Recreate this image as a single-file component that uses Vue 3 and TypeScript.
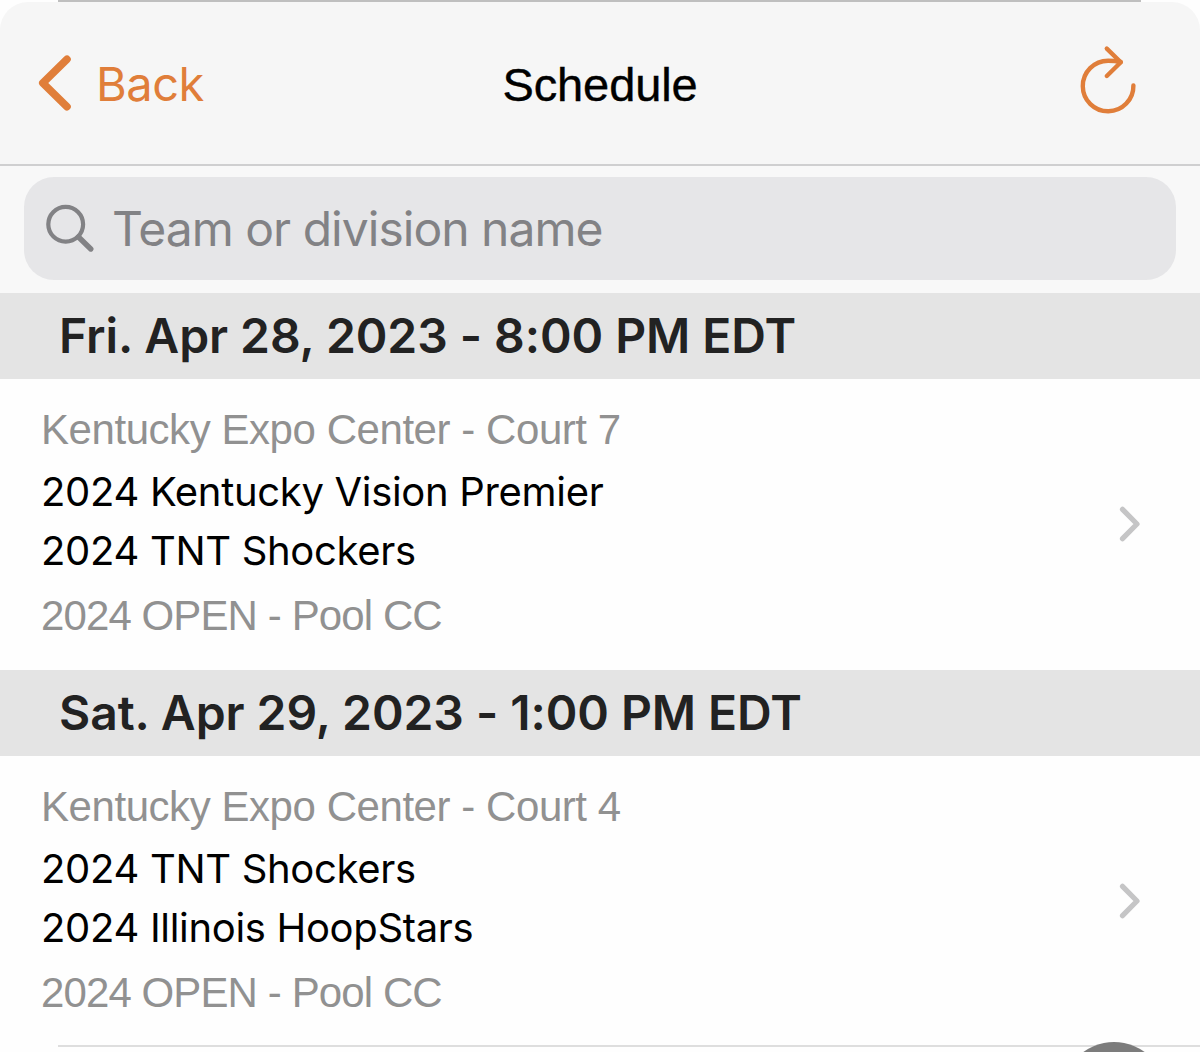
<script setup lang="ts">
interface Game {
  id: number
  date: string
  venue: string
  home: string
  away: string
  pool: string
}

const games: Game[] = [
  {
    id: 1,
    date: 'Fri. Apr 28, 2023 - 8:00 PM EDT',
    venue: 'Kentucky Expo Center - Court 7',
    home: '2024 Kentucky Vision Premier',
    away: '2024 TNT Shockers',
    pool: '2024 OPEN - Pool CC',
  },
  {
    id: 2,
    date: 'Sat. Apr 29, 2023 - 1:00 PM EDT',
    venue: 'Kentucky Expo Center - Court 4',
    home: '2024 TNT Shockers',
    away: '2024 Illinois HoopStars',
    pool: '2024 OPEN - Pool CC',
  },
]
</script>

<template>
  <main class="screen">
    <div class="top-rule"></div>
    <header class="nav">
      <button class="back" type="button">
        <svg width="34" height="56" viewBox="0 0 34 56" fill="none" stroke="currentColor" stroke-width="7.6" stroke-linecap="round" stroke-linejoin="round">
          <path d="M29 4.3 4.8 28 29 51.7" />
        </svg>
        <span class="back-label">Back</span>
      </button>
      <h1 class="title">Schedule</h1>
      <button class="refresh" type="button" aria-label="Refresh">
        <svg width="56" height="68" viewBox="0 0 56 68" fill="none" stroke="currentColor" stroke-width="4.4" stroke-linecap="round" stroke-linejoin="round">
          <path d="M53.4 41.5A25.3 25.3 0 1 1 28.1 16.7Q35 16.7 40.8 18" />
          <path d="M26.8 4.6 40.8 18.3 26.8 32" />
        </svg>
      </button>
    </header>
    <div class="search-bar">
      <div class="search-field">
        <svg width="49" height="49" viewBox="0 0 49 49" fill="none" stroke="currentColor" stroke-linecap="round">
          <circle cx="19.7" cy="20.2" r="17.4" stroke-width="4.2" />
          <path d="M32.5 33 44.8 45" stroke-width="5.4" />
        </svg>
        <span class="placeholder">Team or division name</span>
      </div>
    </div>
    <section v-for="game in games" :key="game.id">
      <h2 class="date">{{ game.date }}</h2>
      <div class="game">
        <div class="info">
          <div class="venue">{{ game.venue }}</div>
          <div class="team">{{ game.home }}</div>
          <div class="team">{{ game.away }}</div>
          <div class="pool">{{ game.pool }}</div>
        </div>
        <svg class="chevron" width="22" height="36" viewBox="0 0 22 36" fill="none" stroke="currentColor" stroke-width="5.2" stroke-linecap="round" stroke-linejoin="round">
          <path d="M3.5 3.3 18 18 3.5 32.7" />
        </svg>
      </div>
    </section>
    <div class="row-rule"></div>
    <div class="floating"></div>
  </main>
</template>

<style>
body {
  margin: 0;
  background: #fff;
}
</style>

<style scoped>
.screen {
  position: relative;
  width: 1200px;
  height: 1052px;
  overflow: hidden;
  background: #fefefe;
  color: #000;
  font-family: Inter, 'Liberation Sans', sans-serif;
  white-space: nowrap;
}
.top-rule {
  height: 2px;
  margin: 0 59px 0 58px;
  background: #bfbfbf;
}
.nav {
  display: grid;
  grid-template-columns: 1fr auto 1fr;
  align-items: start;
  box-sizing: border-box;
  height: 164px;
  border-bottom: 2px solid #cfcfd0;
  background: #f6f6f6;
  clip-path: inset(0 round 28px 28px 0 0);
}
button {
  border: 0;
  padding: 0;
  background: none;
  color: #e07e3a;
  font: inherit;
}
.back {
  display: flex;
  align-items: center;
  justify-self: start;
  margin: 53px 0 0 38px;
  height: 56px;
}
.back-label {
  margin: 2px 0 0 24px;
  font-size: 47px;
  line-height: 56px;
  letter-spacing: -0.5px;
}
.title {
  margin: 51px 0 0;
  font: 400 47px/64px 'Liberation Sans', Arial, sans-serif;
  letter-spacing: -0.1px;
  -webkit-text-stroke: 0.4px #000;
}
.refresh {
  justify-self: end;
  margin: 42px 64px 0 0;
  height: 68px;
}
.refresh svg {
  display: block;
  overflow: visible;
}
.search-bar {
  box-sizing: border-box;
  height: 127px;
  padding: 11px 24px 13px;
  background: #f8f8f8;
}
.search-field {
  display: flex;
  align-items: center;
  height: 103px;
  padding-left: 22px;
  border-radius: 30px;
  background: #e6e6e8;
  color: #828285;
}
.placeholder {
  margin-left: 17px;
  font-size: 48px;
  line-height: 103px;
  letter-spacing: -0.98px;
}
.date {
  margin: 0;
  height: 86px;
  padding-left: 59px;
  background: #e4e4e4;
  color: #222;
  font-size: 48px;
  font-weight: 600;
  line-height: 86px;
  letter-spacing: -0.06px;
}
.game {
  display: flex;
  align-items: center;
  justify-content: space-between;
  box-sizing: border-box;
  height: 291px;
  padding: 0 59px 0 41px;
}
.info {
  box-sizing: border-box;
  height: 291px;
  padding-top: 20px;
}
.venue,
.pool {
  color: #919191;
  font-family: 'Liberation Sans', Arial, sans-serif;
  font-size: 42px;
}
.venue {
  margin-bottom: 2px;
  line-height: 61px;
  letter-spacing: -0.44px;
}
.team {
  font-size: 40px;
  line-height: 59px;
  letter-spacing: -0.32px;
}
.pool {
  margin-top: 6px;
  line-height: 60px;
  letter-spacing: -0.9px;
}
.chevron {
  margin-bottom: 2px;
  color: #c5c5c6;
}
.row-rule {
  height: 2px;
  margin: -2px 0 0 58px;
  background: #dedede;
}
.floating {
  position: absolute;
  left: 1062px;
  top: 1042px;
  width: 104px;
  height: 104px;
  border-radius: 50%;
  background: #7c7c7c;
}
</style>
